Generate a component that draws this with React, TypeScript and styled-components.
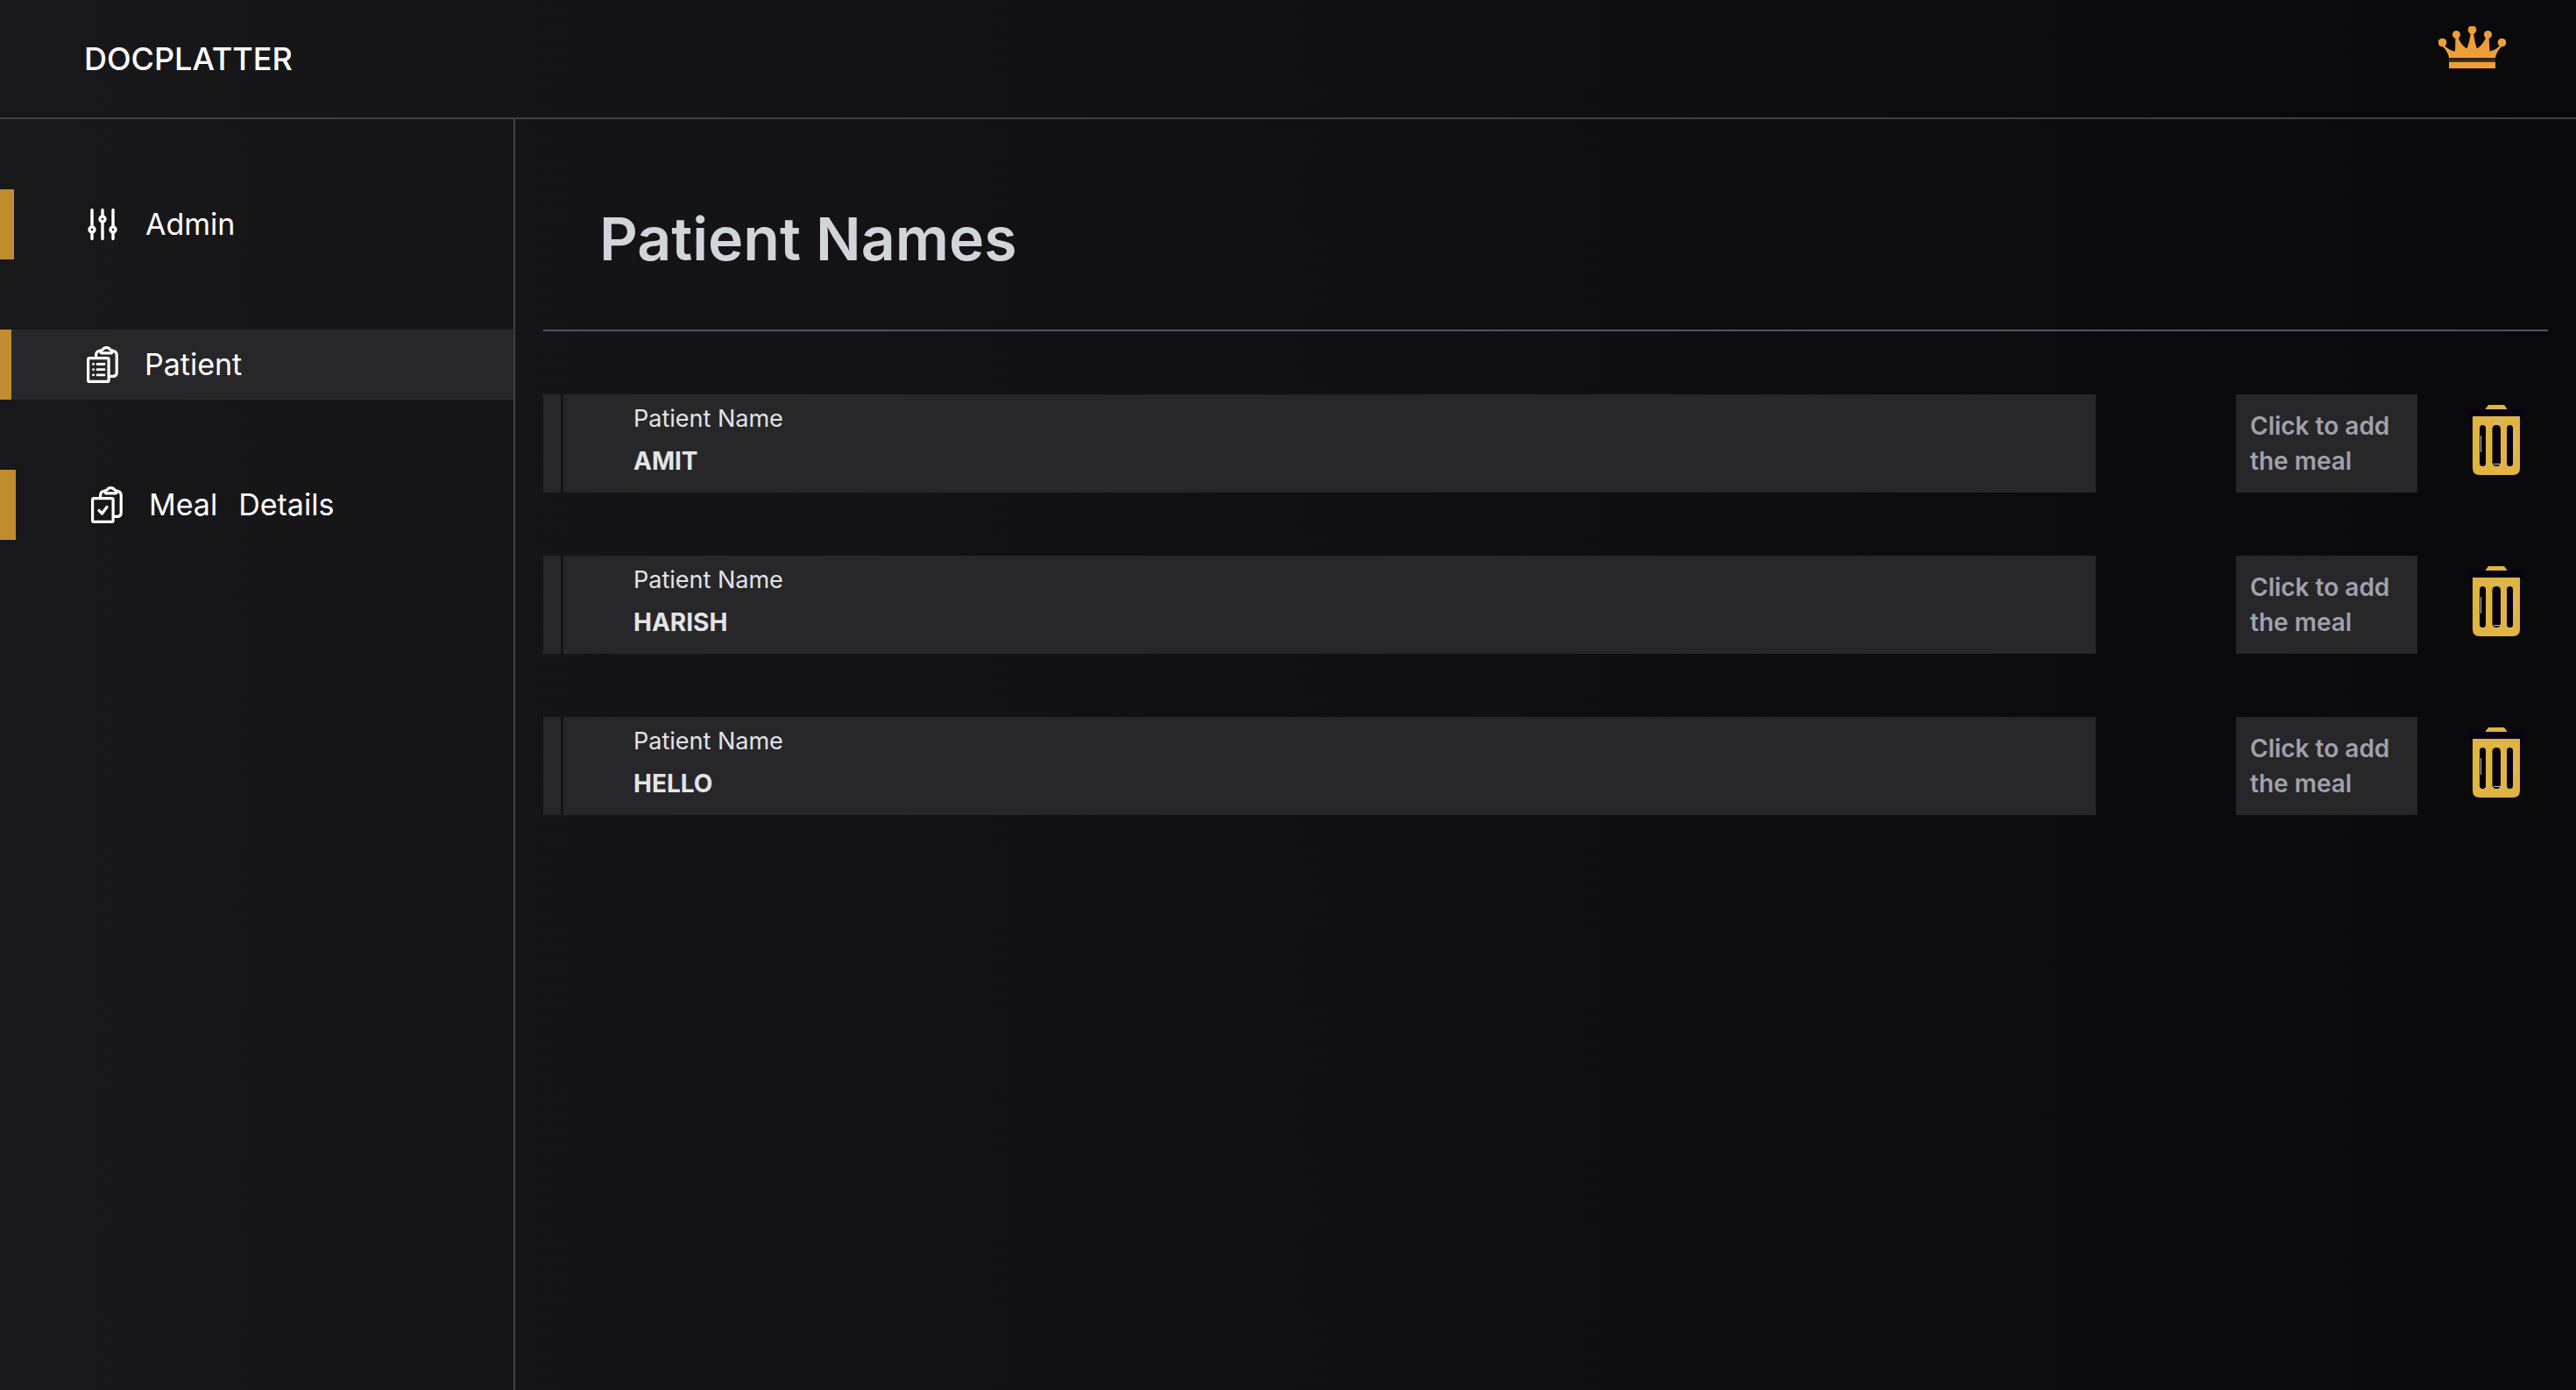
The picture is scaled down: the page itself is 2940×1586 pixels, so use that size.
import React from "react";
import styled, { createGlobalStyle } from "styled-components";

const GlobalStyle = createGlobalStyle`
  *, *::before, *::after { box-sizing: border-box; }
  body {
    margin: 0;
    background: #09090b;
    font-family: Inter, "Liberation Sans", sans-serif;
    color: #ffffff;
  }
  h1, p, ul { margin: 0; padding: 0; }
  ul { list-style: none; }
`;

const Page = styled.div`
  display: flex;
  flex-direction: column;
  min-height: 100vh;
  background: linear-gradient(to right, #18181b, #09090b);
`;

const Header = styled.header`
  display: flex;
  align-items: flex-start;
  justify-content: space-between;
  height: 136px;
  padding: 30px 80px 0 96px;
  border-bottom: 2px solid #3f3f46;
`;

const Brand = styled.a`
  padding-top: 16px;
  font-size: 36px;
  line-height: 42px;
  font-weight: 500;
  color: #ffffff;
  text-decoration: none;
`;

const Body = styled.div`
  display: flex;
  flex: 1;
`;

const Sidebar = styled.nav`
  flex: 0 0 20%;
  padding-top: 80px;
  border-right: 2px solid #3f3f46;
`;

const NavList = styled.ul`
  display: flex;
  flex-direction: column;
  gap: 80px;
`;

const NavLink = styled.a<{ $active?: boolean; $accent: number }>`
  display: flex;
  align-items: center;
  gap: 28px;
  height: 80px;
  padding-left: 84px;
  border-left: ${(p) => p.$accent}px solid #c08c30;
  background: ${(p) => (p.$active ? "#27272a" : "transparent")};
  font-size: 34px;
  line-height: 56px;
  color: #ffffff;
  text-decoration: none;
`;

const NavLabel = styled.span`
  display: flex;
  gap: 24px;
`;

const Main = styled.main`
  flex: 1;
  min-width: 0;
  padding: 80px 32px;
`;

const TitleBar = styled.div`
  padding: 16px 64px 64px;
  border-bottom: 2px solid #4b5563;
`;

const Title = styled.h1`
  font-size: 68px;
  line-height: 80px;
  font-weight: 600;
  color: #d1d5db;
`;

const PatientList = styled.ul`
  display: flex;
  flex-direction: column;
  gap: 72px;
  padding-top: 72px;
`;

const PatientRow = styled.li`
  display: flex;
  align-items: stretch;
  height: 112px;
`;

const Handle = styled.span`
  width: 20px;
  margin-right: 3px;
  background: #27272a;
`;

const PatientCard = styled.div`
  flex: 1;
  padding: 4px 80px;
  background: #27272a;
  color: #e4e4e7;
  font-size: 27px;
  line-height: 48px;
`;

const PatientName = styled.p`
  font-size: 28px;
  font-weight: 700;
`;

const MealButton = styled.button`
  width: 207px;
  margin: 0 58px 0 160px;
  padding: 0 16px;
  border: 0;
  background: #27272a;
  color: #a1a1aa;
  font: 600 28px/40px Inter, "Liberation Sans", sans-serif;
  text-align: left;
`;

const DeleteButton = styled.button`
  display: flex;
  align-items: flex-start;
  width: 64px;
  margin-right: 27px;
  padding: 12px 0 0;
  border: 0;
  background: transparent;
`;

const Crown = () => (
  <svg width="77" height="48" viewBox="0 0 77 48" fill="#ef9f38" aria-hidden="true">
    <circle cx="38.500" cy="4" r="4.800" />
    <circle cx="20.500" cy="9.500" r="4.500" />
    <circle cx="56.500" cy="9.500" r="4.500" />
    <circle cx="4.500" cy="18.500" r="4.800" />
    <circle cx="72.500" cy="18.500" r="4.800" />
    <path d="M6 21 Q12 28 19 28.500 L19.500 11 H22 Q25 21 32.500 25.500 Q35.500 18 37 6 H40 Q41 18 44 25.500 Q51 21 55 11 H57.500 L58.500 28.500 Q65 28 71 21 L73 22 Q66 29 65 36 H12 Q11 29 4 22 Z" />
    <path d="M12 40.500H65V48H12Z" />
    <path d="M12 36.500H65V40.500H12Z" fill="#3a2915" />
  </svg>
);

const SlidersIcon = () => (
  <svg width="38" height="48" viewBox="0 0 38 48" fill="none" stroke="#fff" strokeWidth="3.400" strokeLinecap="round" aria-hidden="true">
    <path d="M5 7.500V26M5 34V40.500M17 7.500V14M17 22V40.500M29 7.500V26M29 34V40.500" />
    <circle cx="5" cy="30" r="3" />
    <circle cx="17" cy="18" r="3" />
    <circle cx="29" cy="30" r="3" />
  </svg>
);

const ClipboardIcon = ({ checked }: { checked?: boolean }) => (
  <svg width="40" height="48" viewBox="0 0 40 48" fill="none" stroke="#fff" strokeWidth="3.200" strokeLinecap="round" strokeLinejoin="round" aria-hidden="true">
    <rect x="3.600" y="16.600" width="23.500" height="26.800" rx="1.500" />
    <path d="M12.600 15V13.500Q12.600 8.500 17.500 8M31 8Q36.200 8.500 36.200 13.500V33Q36.200 37.400 31.500 37.400H28.500" />
    <path d="M19 10.800Q17 10.500 18.500 8Q19.500 7 20.500 6.700Q21.500 4.600 24.500 4.600Q27.500 4.600 28.500 6.700Q29.500 7 30.500 8Q32 10.500 30 10.800Z" />
    {checked ? (
      <path d="M11 30.500L14.500 34L20 26.500" />
    ) : (
      <path d="M14 23.500H22M14 29.700H22M14 35.900H22M9.500 23.500H9.600M9.500 29.700H9.600M9.500 35.900H9.600" strokeWidth="2.800" />
    )}
  </svg>
);

const TrashIcon = () => (
  <svg width="64" height="80" viewBox="0 0 64 80" aria-hidden="true">
    <path d="M19 5.500L23 0H41L45 5.500Z" fill="#e0b443" />
    <rect x="1" y="5" width="62" height="9" rx="1" fill="#080014" />
    <path d="M5 13H59V72Q59 80 51 80H13Q5 80 5 72Z" fill="#e0b443" />
    <g fill="#050010">
      <rect x="13" y="23" width="7" height="47" rx="3.500" />
      <rect x="27.500" y="23" width="9.500" height="47" rx="4.500" />
      <rect x="44" y="23" width="7" height="47" rx="3.500" />
    </g>
    <path d="M29 20.500H38M14.500 35V54M53.500 35V54M29 67.500H38" stroke="#c9c4b8" strokeWidth="1" />
  </svg>
);

const navItems = [
  { words: ["Admin"], accent: 16, icon: <SlidersIcon /> },
  { words: ["Patient"], accent: 13, icon: <ClipboardIcon />, active: true },
  { words: ["Meal", "Details"], accent: 18, icon: <ClipboardIcon checked /> },
];

const patients = ["AMIT", "HARISH", "HELLO"];

export default function App() {
  return (
    <Page>
      <GlobalStyle />
      <Header>
        <Brand href="#">DOCPLATTER</Brand>
        <Crown />
      </Header>
      <Body>
        <Sidebar aria-label="Main">
          <NavList>
            {navItems.map((item) => (
              <li key={item.words[0]}>
                <NavLink href="#" $accent={item.accent} $active={item.active}>
                  {item.icon}
                  <NavLabel>
                    {item.words.map((word) => (
                      <span key={word}>{word}</span>
                    ))}
                  </NavLabel>
                </NavLink>
              </li>
            ))}
          </NavList>
        </Sidebar>
        <Main>
          <TitleBar>
            <Title>Patient Names</Title>
          </TitleBar>
          <PatientList>
            {patients.map((name) => (
              <PatientRow key={name}>
                <Handle />
                <PatientCard>
                  <p>Patient Name</p>
                  <PatientName>{name}</PatientName>
                </PatientCard>
                <MealButton type="button">Click to add the meal</MealButton>
                <DeleteButton type="button" aria-label={`Delete ${name}`}>
                  <TrashIcon />
                </DeleteButton>
              </PatientRow>
            ))}
          </PatientList>
        </Main>
      </Body>
    </Page>
  );
}
